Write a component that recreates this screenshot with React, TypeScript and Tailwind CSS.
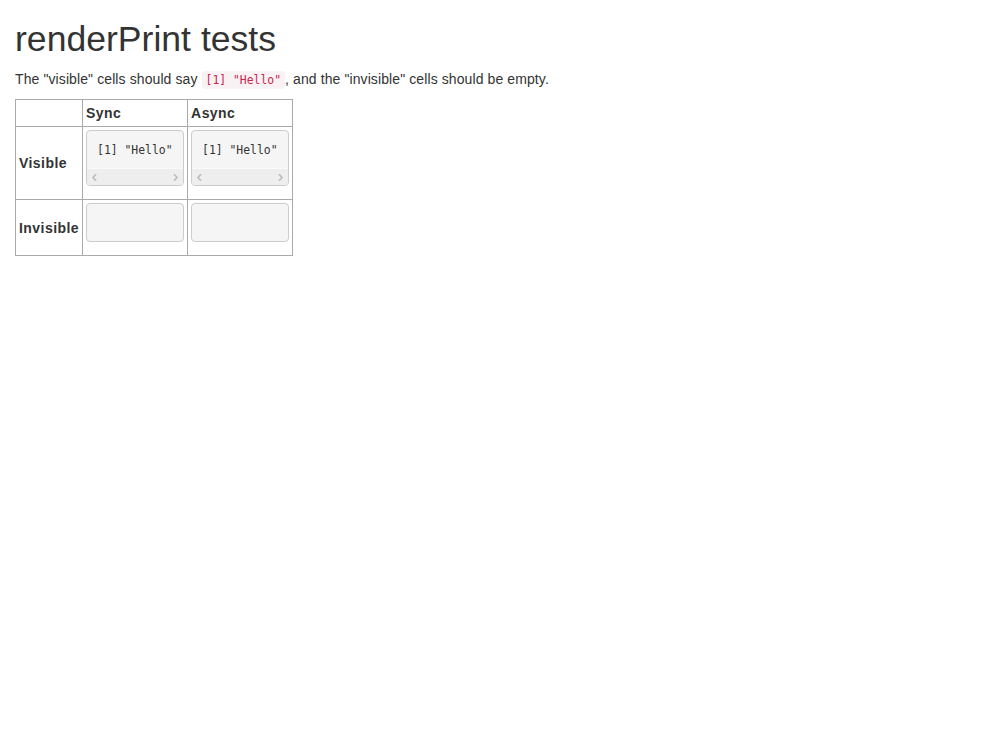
import React from "react";

const sans = "font-['Liberation_Sans',Arial,sans-serif]";
const mono = "font-['DejaVu_Sans_Mono',monospace]";

function Chevron({ dir }: { dir: "l" | "r" }) {
  return (
    <svg width="7" height="9" viewBox="0 0 7 9" className="block">
      <path
        d={dir === "l" ? "M5 1.2 L2 4.5 L5 7.8" : "M2 1.2 L5 4.5 L2 7.8"}
        fill="none"
        stroke="#bdbdbd"
        strokeWidth="1.7"
      />
    </svg>
  );
}

function VisiblePre() {
  return (
    <div className="w-[98px] mb-[10px] rounded-[4px] border border-[#cccccc] bg-[#f5f5f5] overflow-hidden">
      <div className={`${mono} text-[11.4px] leading-[18px] text-[#333] pt-[10px] pb-[9px] pl-[10px] whitespace-pre`}>
        [1] "Hello"
      </div>
      <div className="h-[17px] border-t border-[#fafafa] bg-[#eeeeee] flex items-center justify-between px-[4px]">
        <Chevron dir="l" />
        <Chevron dir="r" />
      </div>
    </div>
  );
}

function EmptyPre() {
  return (
    <div className="w-[98px] h-[39px] mb-[10px] rounded-[4px] border border-[#cccccc] bg-[#f5f5f5]" />
  );
}

const th = "border border-[#aaaaaa] p-[3px] text-left font-bold tracking-[0.45px]";
const td = "border border-[#aaaaaa] p-[3px] align-top";

export default function App() {
  return (
    <div className={`${sans} text-[14px] leading-[20px] text-[#333333] bg-white min-h-[744px] px-[15px]`}>
      <h1 className="text-[35.6px] leading-[39px] mt-[20px] mb-[10px] font-normal">renderPrint tests</h1>
      <p className="mb-[10px] h-[20px] tracking-[0.1px]">
        The "visible" cells should say{" "}
        <code className={`${mono} text-[11.4px] leading-[14px] tracking-normal text-[#c7254e] bg-[#f9f2f4] rounded-[4px] px-[4px] py-[2px]`}>
          [1] "Hello"
        </code>
        , and the "invisible" cells should be empty.
      </p>
      <table className="border-collapse border border-[#aaaaaa]">
        <thead>
          <tr>
            <th className={`${th} h-[27px]`}></th>
            <th className={`${th} align-top`}>Sync</th>
            <th className={`${th} align-top`}>Async</th>
          </tr>
        </thead>
        <tbody>
          <tr>
            <th className={th}>Visible</th>
            <td className={td}>
              <VisiblePre />
            </td>
            <td className={td}>
              <VisiblePre />
            </td>
          </tr>
          <tr>
            <th className={th}>Invisible</th>
            <td className={td}>
              <EmptyPre />
            </td>
            <td className={td}>
              <EmptyPre />
            </td>
          </tr>
        </tbody>
      </table>
    </div>
  );
}
